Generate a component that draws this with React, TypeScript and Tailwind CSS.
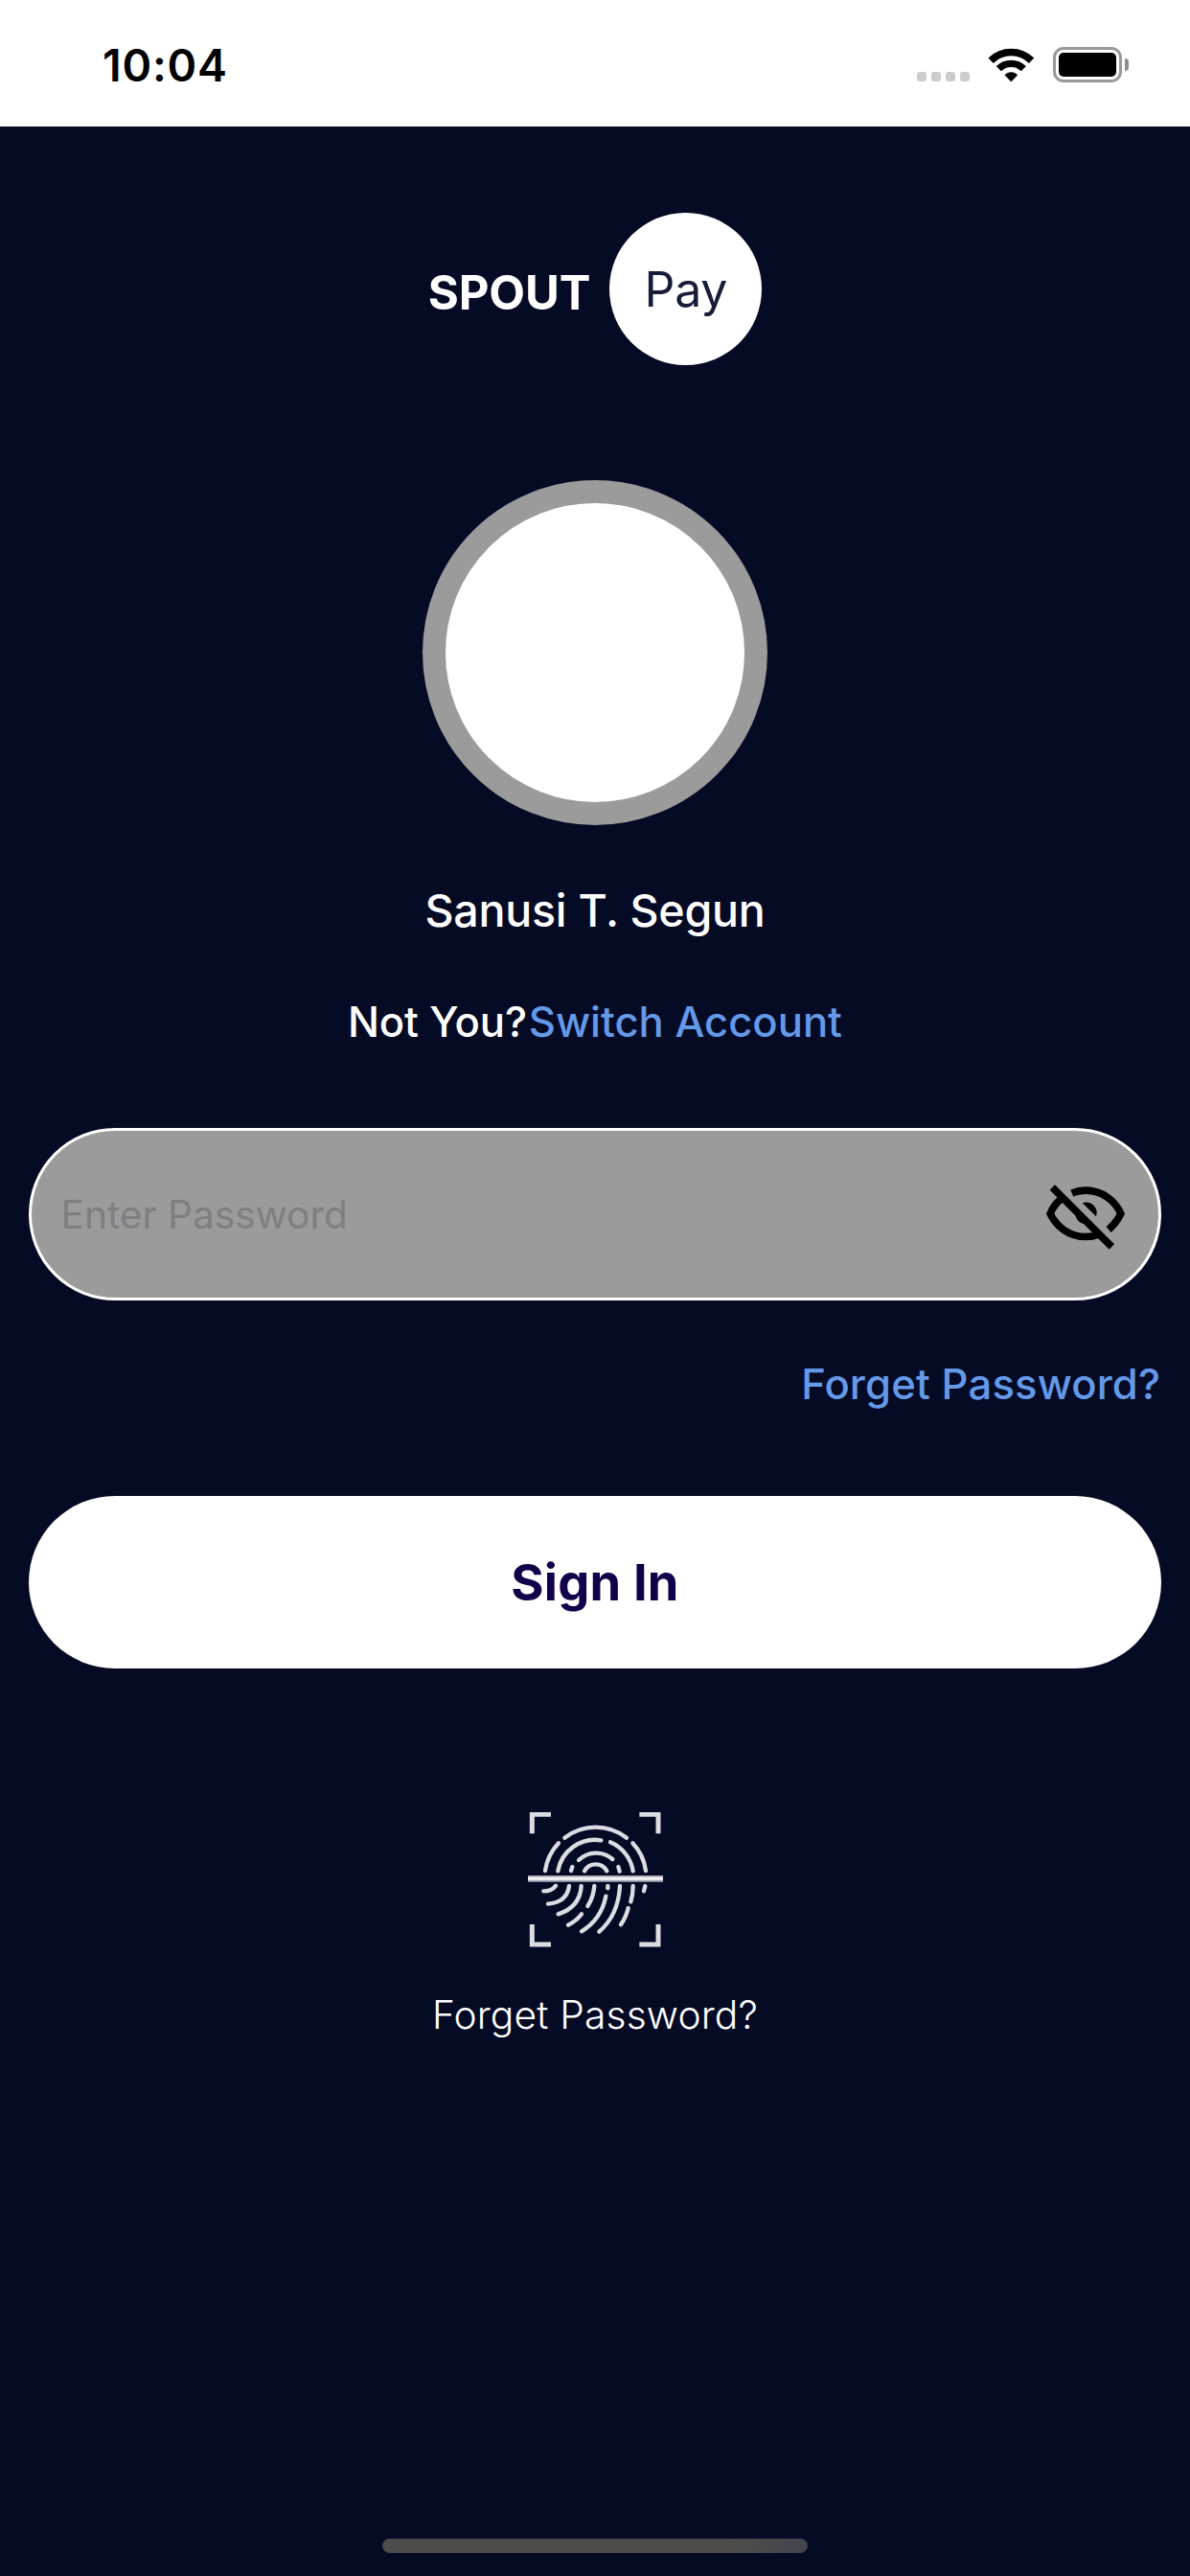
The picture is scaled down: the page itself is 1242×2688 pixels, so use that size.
function WifiIcon() {
  return (
    <svg viewBox="303 56 146 110" className="h-[36.7px] w-[48.7px]" fill="none" stroke="black" strokeWidth="24">
      <path d="M312.4 98.4A91 91 0 0 1 439.6 98.4" strokeWidth="23" />
      <path d="M337.1 124.1A55 55 0 0 1 414.9 124.1" strokeWidth="22" />
      <path d="M376 164L356.5 143.5A28 28 0 0 1 395.5 143.5Z" fill="black" strokeWidth="2" strokeLinejoin="round" />
    </svg>
  );
}

function StatusBar() {
  return (
    <header className="flex h-[132px] shrink-0 items-start justify-between bg-white pl-[107px] pr-[64px] text-black">
      <span className="mt-[38px] text-[46.5px] font-semibold leading-[60px] tracking-[0.8px]">10:04</span>
      <div className="mt-[49px] flex h-[37px] items-start">
        <div className="mt-[26px] flex gap-[5px]">
          <span className="size-[10px] rounded-[3px] bg-[#cccccc]" />
          <span className="size-[10px] rounded-[3px] bg-[#cccccc]" />
          <span className="size-[10px] rounded-[3px] bg-[#cccccc]" />
          <span className="size-[10px] rounded-[3px] bg-[#cccccc]" />
        </div>
        <div className="ml-[19px]">
          <WifiIcon />
        </div>
        <div className="ml-[19px] flex items-center">
          <div className="h-[37px] w-[72px] rounded-[11px] border-[3px] border-[#999999] p-[3px]">
            <div className="h-full w-full rounded-[5px] bg-black" />
          </div>
          <div className="ml-[3px] h-[13px] w-[4px] rounded-r-full bg-[#8c8c8c]" />
        </div>
      </div>
    </header>
  );
}

function Logo() {
  return (
    <div className="mt-[90px] flex h-[159px] items-center gap-[20px]">
      <span className="mt-[8px] text-[49px] font-bold leading-[60px] tracking-[-0.1px] text-white">SPOUT</span>
      <div className="flex size-[159px] items-center justify-center rounded-full bg-white">
        <span className="text-[50px] leading-[60px] tracking-[-0.2px] text-[#171c38]">Pay</span>
      </div>
    </div>
  );
}

function EyeOffIcon() {
  return (
    <svg viewBox="90 135 258 210" className="mt-[6px] h-[70px] w-[86px]" fill="none" stroke="black" strokeWidth="23">
      <path d="M176 165Q197 156.500 219 156.500C270 156.500 311 188 329.500 229Q315 259 291 279" />
      <path d="M143 183Q119 202 108.500 229C127 270 168 301.500 219 301.500Q243 301.500 264 294" />
      <path d="M115 147L301 333" />
      <path d="M209 196A33 33 0 0 1 252 238Z" fill="black" stroke="none" />
      <path d="M187 225A34 34 0 0 0 223 262Z" fill="black" stroke="none" />
    </svg>
  );
}

function FingerprintIcon() {
  return (
    <svg viewBox="63 63 423 423" className="mt-[150px] size-[141px]" fill="none" stroke="#dcdde3" strokeWidth="13">
      <path d="M76 130V70H135M412 70H471V130M76 414V477H135M412 477H471V414" strokeWidth="15" />
      <g strokeLinecap="round">
        <path d="M117 246A158 158 0 0 1 159 160" />
        <path d="M178 143A158 158 0 0 1 372 143" />
        <path d="M391 160A158 158 0 0 1 432 246" />
        <path d="M157 247A118 118 0 0 1 292 151" />
        <path d="M321 157A118 118 0 0 1 392 247" />
        <path d="M198 246L202 234" />
        <path d="M222 213A78 78 0 0 1 328 210" />
        <path d="M346 234L350 248" />
        <path d="M240 247A40 40 0 0 1 310 247" />
        <path d="M112 310Q138 310 150 293" />
        <path d="M126 350Q185 345 192 294" />
        <path d="M158 382Q226 360 230 294" />
        <path d="M189 416Q215 404 231 382" />
        <path d="M250 357Q268 330 271 294" />
        <path d="M231 436Q293 398 307 326" />
        <path d="M313 294V301" />
        <path d="M286 437Q346 385 351 294" />
        <path d="M354 415Q370 392 377 363" />
        <path d="M385 343Q392 322 392 294" />
        <path d="M426 310L430 294" />
      </g>
      <path d="M63 271H486" stroke="#a9abb8" strokeWidth="20" />
      <path d="M63 271H486" stroke="#f4f4f6" strokeWidth="9" />
    </svg>
  );
}

export default function App() {
  return (
    <div className="flex h-[2688px] w-[1242px] flex-col overflow-hidden bg-[#050a25] font-['Inter',sans-serif]">
      <StatusBar />
      <main className="flex flex-1 flex-col items-center px-[30px]">
        <Logo />
        <div className="mt-[120px] size-[360px] rounded-full border-[24px] border-[#9b9b9b] bg-white" />
        <h1 className="mt-[59px] text-[46.5px] font-medium leading-[60px] tracking-[-0.24px] text-white">
          Sanusi T. Segun
        </h1>
        <div className="mt-[57px] flex gap-[2px] text-[43.6px] font-medium leading-[60px]">
          <span className="tracking-[-0.14px] text-white">Not You?</span>
          <a className="text-[#6499e8]">Switch Account</a>
        </div>
        <div className="mt-[80px] flex h-[180px] w-full items-center justify-between rounded-full border-[3px] border-white bg-[#9b9b9b] pl-[30.5px] pr-[33px]">
          <span className="mt-[2px] text-[40.7px] leading-[60px] tracking-[-0.06px] text-[#7f7f81]">Enter Password</span>
          <EyeOffIcon />
        </div>
        <a className="mr-[1px] mt-[58px] self-end text-[43.6px] font-medium leading-[60px] tracking-[0.13px] text-[#6499e8]">
          Forget Password?
        </a>
        <button className="mt-[86px] h-[180px] w-full rounded-full bg-white text-[52.4px] font-bold leading-[60px] tracking-[0.2px] text-[#12004a]">
          Sign In
        </button>
        <FingerprintIcon />
        <p className="mt-[41px] text-[40.7px] font-light leading-[60px] tracking-[0.17px] text-white">
          Forget Password?
        </p>
        <div className="mb-[24px] mt-auto h-[15px] w-[444px] rounded-full bg-linear-to-r from-[#4d4c4b] from-85% to-[#42444c]" />
      </main>
    </div>
  );
}
